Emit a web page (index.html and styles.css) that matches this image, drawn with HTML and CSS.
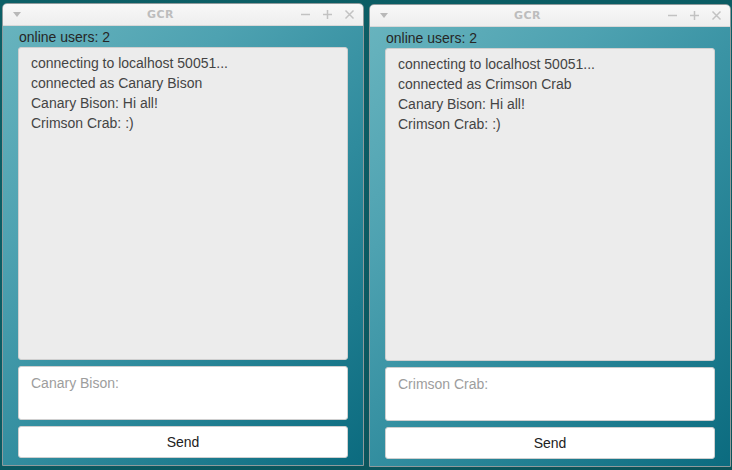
FILE: index.html
```html
<!DOCTYPE html>
<html>
<head>
<meta charset="utf-8">
<link rel="stylesheet" href="styles.css">
</head>
<body>
<div class="desktop">
  <div class="window">
    <div class="titlebar">
      <svg class="menu-ico" width="8" height="5" viewBox="0 0 8 5"><path d="M0 0H8L4 5Z" fill="#b8b8b8"/></svg>
      <span class="title">GCR</span>
      <div class="controls">
        <svg width="11" height="11" viewBox="0 0 11 11"><path d="M1 5.5H10" stroke="#c2c2c2" stroke-width="1.5"/></svg>
        <svg width="11" height="11" viewBox="0 0 11 11"><path d="M1 5.5H10M5.5 1V10" stroke="#c2c2c2" stroke-width="1.5"/></svg>
        <svg width="11" height="11" viewBox="0 0 11 11"><path d="M1.5 1.5L9.5 9.5M9.5 1.5L1.5 9.5" stroke="#c2c2c2" stroke-width="1.5"/></svg>
      </div>
    </div>
    <div class="content">
      <div class="online">online users: 2</div>
      <div class="log">
        <div>connecting to localhost 50051...</div>
        <div>connected as Canary Bison</div>
        <div>Canary Bison: Hi all!</div>
        <div>Crimson Crab: :)</div>
      </div>
      <div class="input"><span class="placeholder">Canary Bison:</span></div>
      <div class="send">Send</div>
    </div>
  </div>
  <div class="window second">
    <div class="titlebar">
      <svg class="menu-ico" width="8" height="5" viewBox="0 0 8 5"><path d="M0 0H8L4 5Z" fill="#b8b8b8"/></svg>
      <span class="title">GCR</span>
      <div class="controls">
        <svg width="11" height="11" viewBox="0 0 11 11"><path d="M1 5.5H10" stroke="#c2c2c2" stroke-width="1.5"/></svg>
        <svg width="11" height="11" viewBox="0 0 11 11"><path d="M1 5.5H10M5.5 1V10" stroke="#c2c2c2" stroke-width="1.5"/></svg>
        <svg width="11" height="11" viewBox="0 0 11 11"><path d="M1.5 1.5L9.5 9.5M9.5 1.5L1.5 9.5" stroke="#c2c2c2" stroke-width="1.5"/></svg>
      </div>
    </div>
    <div class="content">
      <div class="online">online users: 2</div>
      <div class="log">
        <div>connecting to localhost 50051...</div>
        <div>connected as Crimson Crab</div>
        <div>Canary Bison: Hi all!</div>
        <div>Crimson Crab: :)</div>
      </div>
      <div class="input"><span class="placeholder">Crimson Crab:</span></div>
      <div class="send">Send</div>
    </div>
  </div>
</div>
</body>
</html>
```
FILE: styles.css
```css
html, body {
  margin: 0;
  padding: 0;
}
body {
  width: 732px;
  height: 470px;
  overflow: hidden;
  background: linear-gradient(160deg, #0c5f66 0%, #0a5a62 60%, #0b5258 100%);
  font-family: "Liberation Sans", Arial, sans-serif;
}
.desktop {
  display: flex;
  align-items: flex-start;
  gap: 5px;
  padding: 3px 0 0 2px;
}
.window {
  width: 360px;
  height: 461px;
  border: 1px solid #8e9a9c;
  border-radius: 5px 5px 0 0;
  display: flex;
  flex-direction: column;
  overflow: hidden;
  background: linear-gradient(135deg, #6ab5bf 0%, #4ea2b1 30%, #2f8b9d 60%, #0b6b7f 100%);
}
.window.second {
  margin-top: 1px;
}
.titlebar {
  height: 21px;
  flex: none;
  background: linear-gradient(#f8f8f8, #eeeeee);
  border-bottom: 1px solid #d8d8d8;
  display: flex;
  align-items: center;
}
.menu-ico {
  margin-left: 10px;
  flex: none;
}
.title {
  flex: 1;
  text-align: center;
  font-family: "DejaVu Sans", sans-serif;
  font-weight: bold;
  font-size: 11px;
  color: #bdbdbd;
  letter-spacing: 0.4px;
}
.controls {
  margin-right: 8px;
  display: flex;
  gap: 11px;
}
.controls svg {
  display: block;
}
.content {
  flex: 1;
  display: flex;
  flex-direction: column;
  padding: 1px 15px 7px 15px;
}
.online {
  font-size: 14px;
  line-height: 20px;
  color: #262626;
  padding-left: 1px;
}
.log {
  height: 313px;
  box-sizing: border-box;
  background: #ececec;
  border: 1px solid #cfcfcf;
  border-radius: 3px;
  padding: 5px 12px;
  font-size: 14px;
  line-height: 20px;
  color: #444;
}
.input {
  margin-top: 6px;
  height: 54px;
  box-sizing: border-box;
  background: #fff;
  border: 1px solid #cfcfcf;
  border-radius: 3px;
  padding: 6px 12px;
  font-size: 14px;
  line-height: 20px;
}
.placeholder {
  color: #9d9d9d;
}
.send {
  margin-top: 6px;
  height: 32px;
  box-sizing: border-box;
  background: #fff;
  border: 1px solid #cfcfcf;
  border-radius: 3px;
  font-size: 14px;
  line-height: 30px;
  text-align: center;
  color: #222;
}
```
